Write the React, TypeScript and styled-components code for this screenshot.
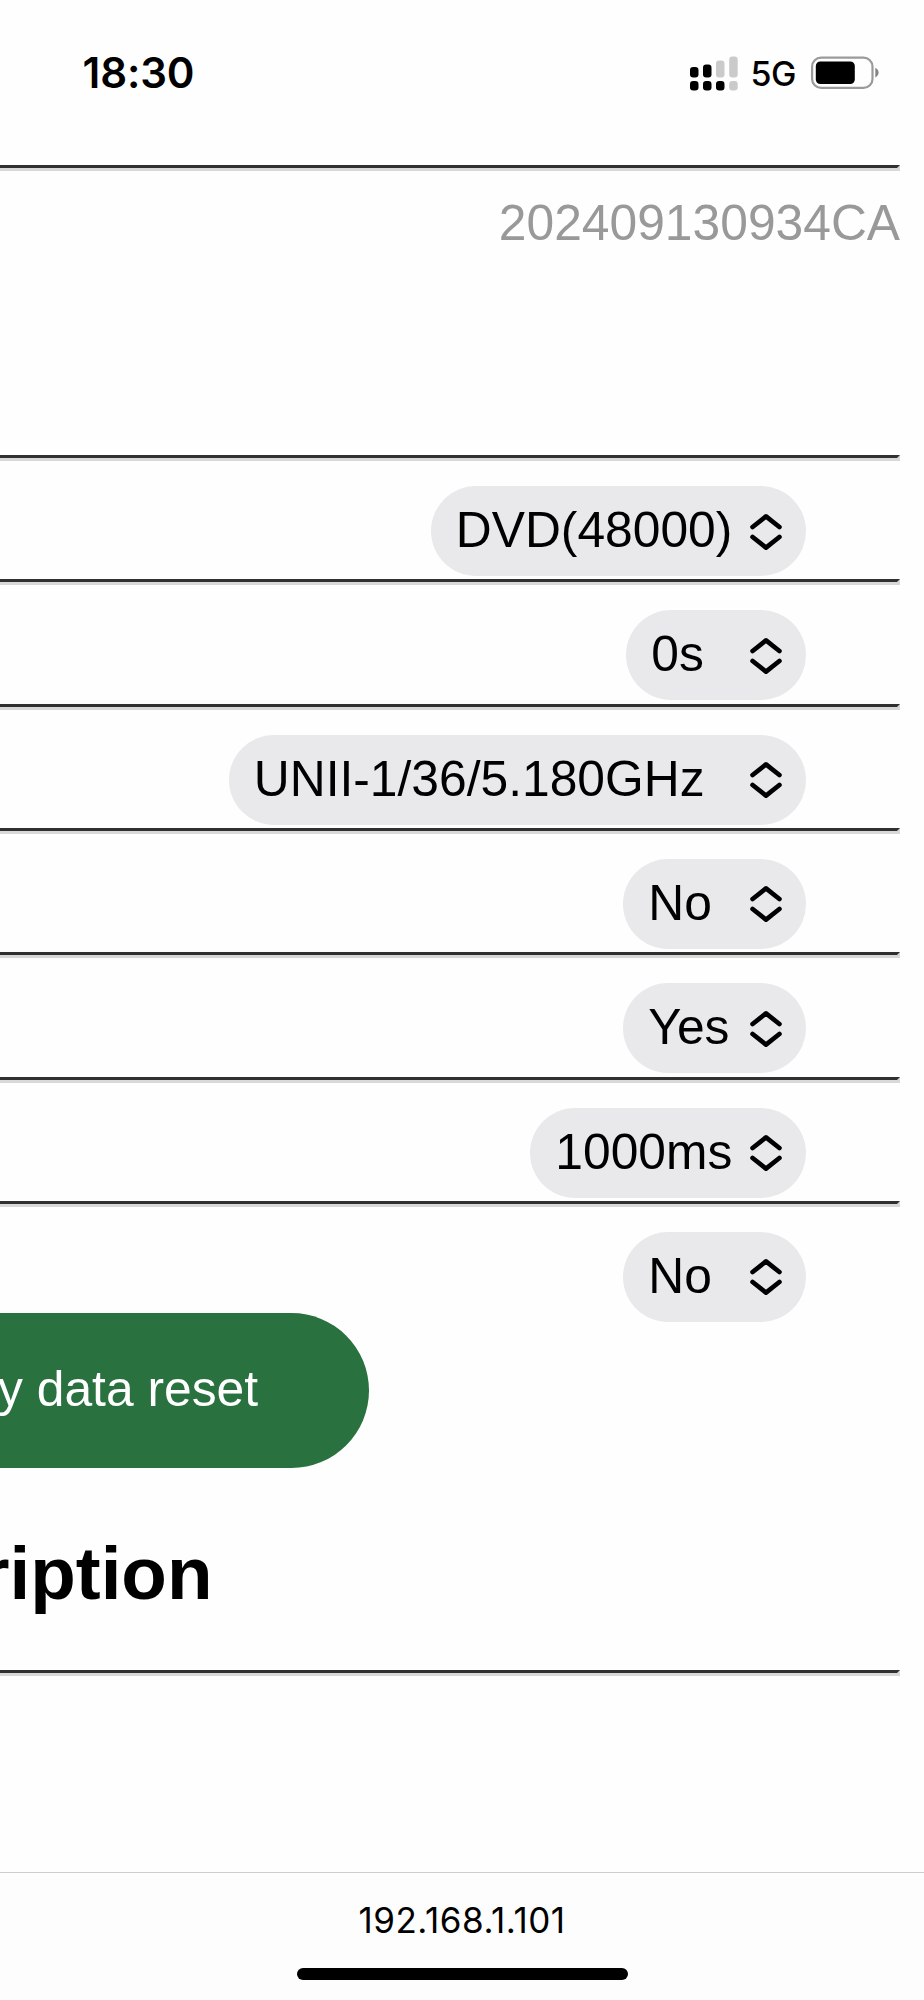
import React from "react";
import styled, { createGlobalStyle } from "styled-components";

const GlobalStyle = createGlobalStyle`
  * { box-sizing: border-box; }
  html, body { margin: 0; padding: 0; background: #fefefe; }
  body { overflow: hidden; }
`;

const Screen = styled.div`
  display: flex;
  flex-direction: column;
  width: 924px;
  height: 2000px;
  overflow: hidden;
  background: #fefefe;
  color: #000;
  font-family: "Liberation Sans", Arial, sans-serif;
  font-size: 49.75px;
`;

const StatusBar = styled.header`
  display: flex;
  justify-content: space-between;
  align-items: flex-start;
  height: 165px;
  padding: 48px 45.5px 0 82.5px;
  font-family: Inter, sans-serif;
`;

const Clock = styled.time`
  font-size: 42px;
  font-weight: 600;
  line-height: 50px;
  letter-spacing: -0.1px;
`;

const StatusIcons = styled.div`
  display: flex;
  align-items: flex-start;
`;

const Network = styled.span`
  width: 73px;
  padding-left: 13px;
  font-size: 34px;
  font-weight: 500;
  line-height: 52px;
  letter-spacing: -0.5px;
`;

const Page = styled.main`
  display: flex;
  flex-direction: column;
  flex: 1;
  min-height: 0;
`;

const Rule = styled.hr`
  flex: none;
  width: 899.5px;
  height: 6px;
  margin: 0;
  border: 3px solid;
  border-left: 0;
  border-color: #2f3131 #d8d8d8 #d8d8d8 #2f3131;
`;

const Version = styled.div`
  height: 284px;
  padding: 23px 24px 0 0;
  text-align: right;
  line-height: 58px;
  color: #999;
`;

const SettingRow = styled.div`
  display: flex;
  flex: none;
  justify-content: flex-end;
  height: 118.33px;
  padding: 25px 118.5px 0 0;
`;

const Picker = styled.button<{ $width: number }>`
  display: flex;
  justify-content: space-between;
  align-items: center;
  width: ${(p) => p.$width}px;
  height: 90px;
  padding: 0 23px 2px 25.3px;
  border: 0;
  border-radius: 45px;
  background: #e9e9eb;
  color: #000;
  font: inherit;
  line-height: 58px;
  white-space: nowrap;
`;

const PickerArrows = styled.svg`
  flex: none;
  margin-top: 3px;
`;

const ResetButton = styled.button`
  flex: none;
  width: 368.5px;
  height: 155px;
  margin-top: -12.5px;
  padding: 0 110.5px 2px 0;
  border: 0;
  border-radius: 0 77.5px 77.5px 0;
  background: #29713f;
  color: #fff;
  font: inherit;
  display: flex;
  justify-content: flex-end;
  align-items: center;
  white-space: nowrap;
`;

const Heading = styled.h2`
  display: flex;
  justify-content: flex-end;
  flex: none;
  width: 212.5px;
  height: 202.5px;
  margin: 0;
  padding-top: 62px;
  font-size: 74.6px;
  font-weight: 700;
  line-height: 86px;
`;

const AddressBar = styled.footer`
  display: flex;
  flex-direction: column;
  align-items: center;
  flex: none;
  height: 128px;
  padding-top: 26px;
  border-top: 1px solid #cdcdcd;
  background: #fdfdfd;
  font-family: Inter, sans-serif;
`;

const Address = styled.span`
  font-size: 35px;
  line-height: 42px;
  letter-spacing: 0.55px;
`;

const HomeIndicator = styled.div`
  width: 331px;
  height: 12px;
  margin-top: 27px;
  border-radius: 6px;
  background: #000;
`;

const Signal = () => (
  <svg width="48" height="36" viewBox="0 0 48 36">
    <g fill="#000">
      <rect x="0" y="11" width="8.5" height="10.5" rx="3.2" />
      <rect x="13" y="8.5" width="8.5" height="13" rx="3.2" />
      <rect x="0" y="25" width="8.5" height="9.5" rx="3.2" />
      <rect x="13" y="25" width="8.5" height="9.5" rx="3.2" />
      <rect x="26" y="25" width="8.5" height="9.5" rx="3.2" />
    </g>
    <g fill="#cacaca">
      <rect x="26" y="4.5" width="8.5" height="17" rx="3.2" />
      <rect x="39.2" y="0.5" width="8.5" height="21" rx="3.2" />
      <rect x="39.2" y="25" width="8.5" height="9.5" rx="3.2" />
    </g>
  </svg>
);

const Battery = () => (
  <svg width="68" height="34" viewBox="0 0 68 34">
    <rect x="1.1" y="1.7" width="60.4" height="30.2" rx="9" fill="none" stroke="#9a9a9a" strokeWidth="2.2" />
    <rect x="4.8" y="5.5" width="39" height="22.6" rx="4.5" fill="#000" />
    <path d="M64.3 11.7C68.7 13.6 68.7 19.6 64.3 21.5Z" fill="#858585" />
  </svg>
);

const IconSlot = styled.span<{ $top: number }>`
  display: flex;
  padding-top: ${(p) => p.$top}px;
`;

const settings = [
  { value: "DVD(48000)", width: 375 },
  { value: "0s", width: 179.5 },
  { value: "UNII-1/36/5.180GHz", width: 577 },
  { value: "No", width: 182.5 },
  { value: "Yes", width: 182.5 },
  { value: "1000ms", width: 275.5 },
  { value: "No", width: 182.5 },
];

export default function App() {
  return (
    <>
      <GlobalStyle />
      <Screen>
        <StatusBar>
          <Clock>18:30</Clock>
          <StatusIcons>
            <IconSlot $top={7.5}><Signal /></IconSlot>
            <Network>5G</Network>
            <IconSlot $top={8}><Battery /></IconSlot>
          </StatusIcons>
        </StatusBar>
        <Page>
          <Rule />
          <Version>202409130934CA</Version>
          {settings.map((s, i) => (
            <React.Fragment key={i}>
              <Rule />
              <SettingRow>
                <Picker $width={s.width}>
                  {s.value}
                  <PickerArrows width="34" height="40" viewBox="0 0 34 40" fill="none" stroke="#000" strokeWidth="4.7" strokeLinecap="round" strokeLinejoin="round">
                    <path d="M3.6 15 17 4.4 30.4 15M3.6 25 17 35.6 30.4 25" />
                  </PickerArrows>
                </Picker>
              </SettingRow>
            </React.Fragment>
          ))}
          <ResetButton>y data reset</ResetButton>
          <Heading>ription</Heading>
          <Rule />
        </Page>
        <AddressBar>
          <Address>192.168.1.101</Address>
          <HomeIndicator />
        </AddressBar>
      </Screen>
    </>
  );
}
